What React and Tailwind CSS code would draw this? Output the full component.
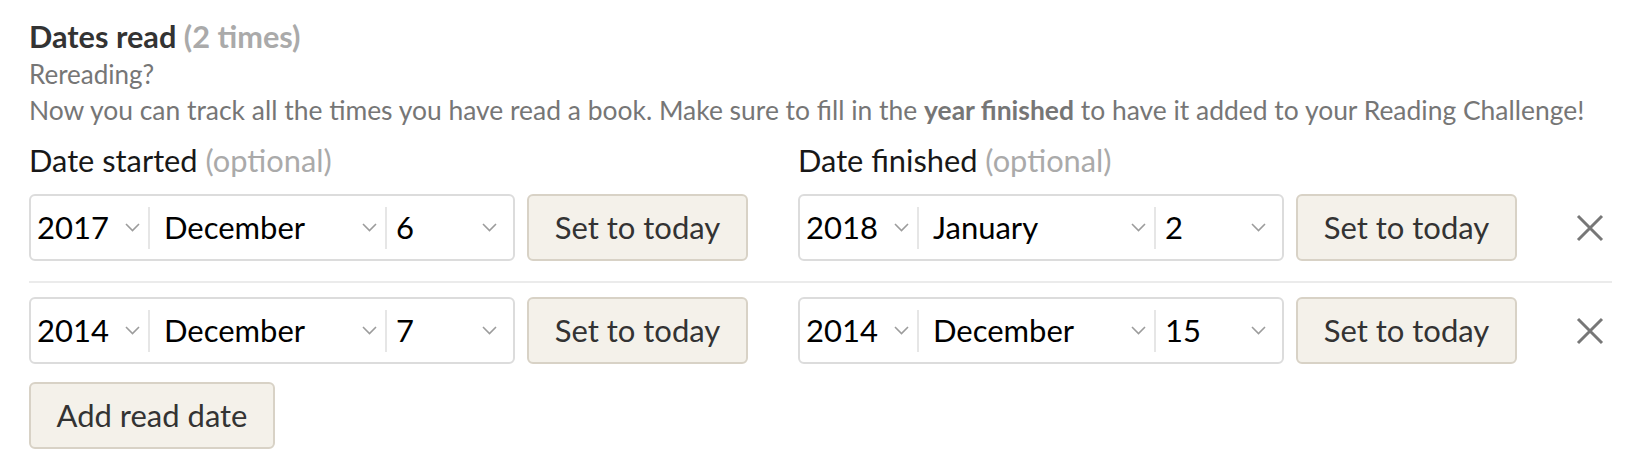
import React from "react";

const Chevron = () => (
  <svg width="15" height="9" viewBox="0 0 15 9" className="shrink-0">
    <path d="M1 1 L7.5 7.5 L14 1" fill="none" stroke="#9c9c9c" strokeWidth="1.6" />
  </svg>
);

const DateSelect = ({ year, month, day }) => (
  <div className="flex h-[67px] w-[486px] items-center rounded-[6px] border-2 border-[#dcdcdc] bg-white text-[31px] text-black">
    <div className="flex w-[117px] items-center justify-between pl-[6px] pr-[8px]">
      <span>{year}</span>
      <Chevron />
    </div>
    <div className="h-[42px] w-[2px] bg-[#e6e6e6]"></div>
    <div className="flex w-[235px] items-center justify-between pl-[14px] pr-[8px]">
      <span>{month}</span>
      <Chevron />
    </div>
    <div className="h-[42px] w-[2px] bg-[#e6e6e6]"></div>
    <div className="flex flex-1 items-center justify-between pl-[9px] pr-[16px]">
      <span>{day}</span>
      <Chevron />
    </div>
  </div>
);

const TodayButton = () => (
  <button className="h-[67px] w-[221px] rounded-[6px] border-2 border-[#d8d2c6] bg-[#f4f1ea] text-[31px] text-[#333]">
    Set to today
  </button>
);

const RemoveIcon = () => (
  <svg width="28" height="28" viewBox="0 0 28 28">
    <path d="M2 2 L26 26 M26 2 L2 26" stroke="#777" strokeWidth="3" />
  </svg>
);

const ReadRow = ({ start, finish, divider }) => (
  <div className={divider ? "flex items-center border-b-2 border-[#ebebeb] pb-[20px] mb-[14px] w-[1583px]" : "flex items-center"}>
    <div className="flex w-[769px] items-center gap-[12px]">
      <DateSelect {...start} />
      <TodayButton />
    </div>
    <div className="flex items-center gap-[12px]">
      <DateSelect {...finish} />
      <TodayButton />
    </div>
    <div className="ml-[59px]">
      <RemoveIcon />
    </div>
  </div>
);

export default function App() {
  return (
    <div className="h-[468px] w-[1640px] bg-white pl-[29px] pt-[18px]" style={{ fontFamily: "Lato, 'Open Sans', sans-serif" }}>
      <h2 className="text-[30.7px] font-bold leading-[38px] text-[#333]">
        Dates read <span className="text-[#aaa]">(2 times)</span>
      </h2>
      <div className="text-[26px] leading-[36px] text-[#767676]">Rereading?</div>
      <div className="text-[26.45px] leading-[36px] text-[#767676]">
        Now you can track all the times you have read a book. Make sure to fill in the{" "}
        <b>year finished</b> to have it added to your Reading Challenge!
      </div>
      <div className="mt-[13px] flex text-[30.8px] leading-[40px] text-[#181818]">
        <div className="w-[769px]">
          Date started <span className="text-[#aaa]">(optional)</span>
        </div>
        <div>
          Date finished <span className="text-[#aaa]">(optional)</span>
        </div>
      </div>
      <div className="mt-[13px]">
        <ReadRow
          divider
          start={{ year: "2017", month: "December", day: "6" }}
          finish={{ year: "2018", month: "January", day: "2" }}
        />
        <ReadRow
          start={{ year: "2014", month: "December", day: "7" }}
          finish={{ year: "2014", month: "December", day: "15" }}
        />
      </div>
      <button className="mt-[18px] h-[67px] w-[246px] rounded-[6px] border-2 border-[#d8d2c6] bg-[#f4f1ea] text-[31px] text-[#333]">
        Add read date
      </button>
    </div>
  );
}
